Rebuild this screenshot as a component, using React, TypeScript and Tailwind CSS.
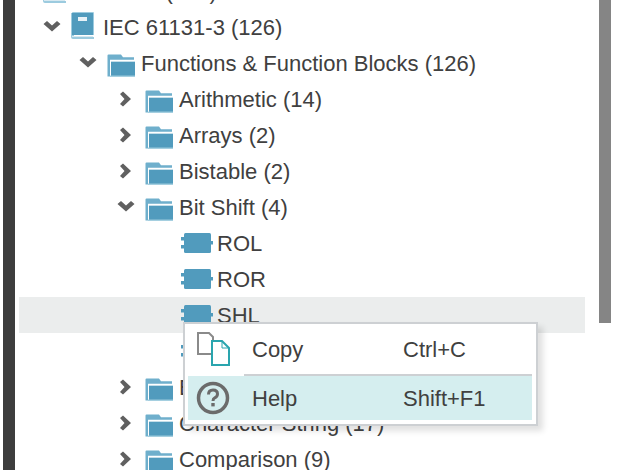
import React from "react";

const Chevron = ({ open }: { open: boolean }) => (
  <svg width="18" height="18" viewBox="0 0 18 18" className="shrink-0">
    {open ? (
      <path d="M0.5 6 L4 3 L9 7.5 L14 3 L17.5 6 L9 13.5 Z" fill="#606060" />
    ) : (
      <path d="M6 1.5 L14 9 L6 16.5 L3 14 L7.5 9 L3 4 Z" fill="#606060" />
    )}
  </svg>
);

const Folder = () => (
  <svg width="28" height="23" viewBox="0 0 28 24" preserveAspectRatio="none" className="mt-[5px] shrink-0">
    <path d="M0.5 23.5 V1.5 Q0.5 0.5 1.5 0.5 H14 L16 3.5 H27 V6 H3 V23.5 Z" fill="#6fafcc" />
    <rect x="4" y="8" width="24" height="15" fill="#519bbd" />
    <rect x="3" y="22.5" width="25" height="1.5" fill="#a5cfe0" />
  </svg>
);

const Book = () => (
  <svg width="23" height="27" viewBox="0 0 23 27" className="mb-[3px] shrink-0">
    <path d="M1 1 Q1 0 2 0 H22 Q23 0 23 1 V23 H3 V25 H23 V27 H2 Q0 27 0 25 V1 Z" fill="#9ccbdf" />
    <rect x="1" y="1" width="21" height="22" fill="#519bbd" />
    <rect x="1" y="24" width="21" height="1" fill="#d7e9f1" />
    <rect x="7" y="5" width="9" height="4" fill="#e8f2f7" />
  </svg>
);

const Block = () => (
  <svg width="32" height="22" viewBox="0 0 32 22" className="shrink-0">
    <rect x="3" y="1" width="27" height="20" rx="1.5" fill="#519bbd" />
    <rect x="0" y="5" width="4" height="3.5" fill="#519bbd" />
    <rect x="0" y="13" width="4" height="3.5" fill="#519bbd" />
    <rect x="29" y="9" width="3" height="3.5" fill="#519bbd" />
  </svg>
);

const CopyIcon = () => (
  <svg width="34" height="34" viewBox="0 0 34 34" className="shrink-0">
    <path d="M16 22 H2 V1 H13 L17 5 V9" fill="none" stroke="#8a8a8a" strokeWidth="2" />
    <path d="M16 9 H26 L33 16 V33 H16 Z" fill="#fff" stroke="#2aa5ae" strokeWidth="2" />
    <path d="M26 9 V16 H33" fill="none" stroke="#2aa5ae" strokeWidth="1" />
  </svg>
);

const HelpIcon = () => (
  <svg width="34" height="34" viewBox="0 0 34 34" className="shrink-0">
    <circle cx="17" cy="17" r="14.5" fill="none" stroke="#6b6b6b" strokeWidth="3.5" />
    <path d="M12.5 13.5 Q12.5 9 17 9 Q21.5 9 21.5 13 Q21.5 15.5 18.8 16.8 Q17 17.8 17 20" fill="none" stroke="#6b6b6b" strokeWidth="3" />
    <rect x="15.3" y="22" width="3.4" height="3.4" fill="#6b6b6b" />
  </svg>
);

type RowProps = {
  level: 1 | 2 | 3 | 4;
  label: string;
  chevron?: "open" | "closed";
  icon: "book" | "folder" | "block";
  selected?: boolean;
};

const Row = ({ level, label, chevron, icon, selected }: RowProps) => {
  const pad = { 1: "pl-[24px]", 2: "pl-[60px]", 3: "pl-[98px]", 4: "pl-[162px]" }[level];
  const textGap = icon === "book" ? "ml-[9px]" : icon === "folder" ? "ml-[6px]" : "ml-[4px]";
  return (
    <div className={`flex h-[36px] items-center ${pad} ${selected ? "bg-[#ebeded]" : ""}`}>
      {chevron && (
        <div className="mr-[10px] flex w-[18px] justify-center">
          <Chevron open={chevron === "open"} />
        </div>
      )}
      {icon === "book" && <Book />}
      {icon === "folder" && <Folder />}
      {icon === "block" && <Block />}
      <span className={`${textGap} whitespace-nowrap pt-[1px]`}>{label}</span>
    </div>
  );
};

export default function App() {
  return (
    <div className="relative flex h-[470px] w-[620px] overflow-hidden bg-white pl-[3px] font-['Liberation_Sans',Arial,sans-serif] text-[22px] text-[#404040]">
      <div className="h-full w-[12px] shrink-0 bg-[#3d3d3d]" />
      <div className="ml-[4px] mt-[-27px] w-[566px] shrink-0">
        <Row level={1} label="Libraries (295)" icon="book" />
        <Row level={1} label="IEC 61131-3 (126)" chevron="open" icon="book" />
        <Row level={2} label="Functions & Function Blocks (126)" chevron="open" icon="folder" />
        <Row level={3} label="Arithmetic (14)" chevron="closed" icon="folder" />
        <Row level={3} label="Arrays (2)" chevron="closed" icon="folder" />
        <Row level={3} label="Bistable (2)" chevron="closed" icon="folder" />
        <Row level={3} label="Bit Shift (4)" chevron="open" icon="folder" />
        <Row level={4} label="ROL" icon="block" />
        <Row level={4} label="ROR" icon="block" />
        <Row level={4} label="SHL" icon="block" selected />
        <Row level={4} label="SHR" icon="block" />
        <Row level={3} label="Bitwise (4)" chevron="closed" icon="folder" />
        <Row level={3} label="Character String (17)" chevron="closed" icon="folder" />
        <Row level={3} label="Comparison (9)" chevron="closed" icon="folder" />
      </div>
      <div className="ml-[14px] h-[323px] w-[12px] shrink-0 bg-[#858585]" />

      <div className="absolute left-[183px] top-[322px] w-[355px] border-2 border-[#cdd0d3] bg-white pb-[4px] pl-[3px] pr-[4px] shadow-[5px_5px_6px_rgba(0,0,0,0.12)]">
        <div className="flex h-[50px] items-center pl-[8px]">
          <CopyIcon />
          <span className="ml-[22px] w-[151px] pt-[1px]">Copy</span>
          <span className="pt-[1px]">Ctrl+C</span>
        </div>
        <div className="ml-[56px] h-[2px] bg-[#cdd0d3]" />
        <div className="flex h-[44px] items-center bg-[#d5eeef] pl-[8px]">
          <HelpIcon />
          <span className="ml-[22px] w-[151px] pt-[1px]">Help</span>
          <span className="pt-[1px]">Shift+F1</span>
        </div>
      </div>
    </div>
  );
}
